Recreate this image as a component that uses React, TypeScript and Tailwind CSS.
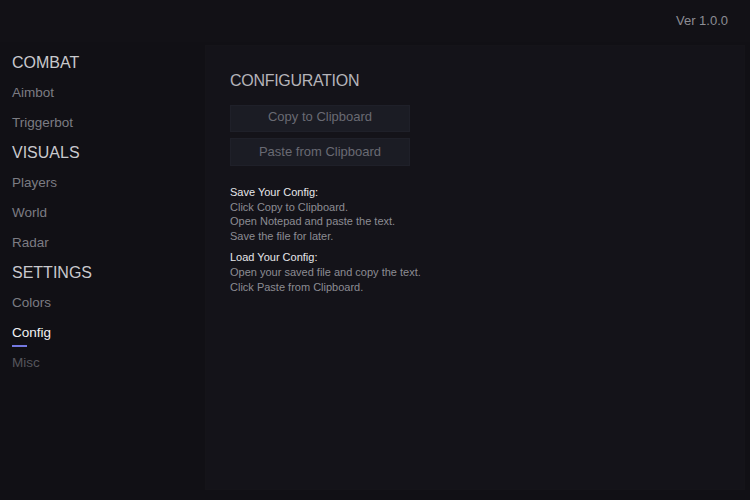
import React from 'react';

type NavItem = { label: string; kind: 'head' | 'item'; active?: boolean; dim?: boolean };

const NAV: NavItem[] = [
  { label: 'COMBAT', kind: 'head' },
  { label: 'Aimbot', kind: 'item' },
  { label: 'Triggerbot', kind: 'item' },
  { label: 'VISUALS', kind: 'head' },
  { label: 'Players', kind: 'item' },
  { label: 'World', kind: 'item' },
  { label: 'Radar', kind: 'item' },
  { label: 'SETTINGS', kind: 'head' },
  { label: 'Colors', kind: 'item' },
  { label: 'Config', kind: 'item', active: true },
  { label: 'Misc', kind: 'item', dim: true },
];

function Sidebar() {
  return (
    <nav className="w-[205px] shrink-0 pl-3 pt-[6px]">
      {NAV.map((n) =>
        n.kind === 'head' ? (
          <div key={n.label} className="h-[30px] flex items-center text-[16px] text-[#c9c9cd]">
            {n.label}
          </div>
        ) : (
          <div key={n.label} className="h-[30px] flex items-center relative">
            <span
              className={`text-[13.5px] ${
                n.active ? 'text-[#f2f2f4]' : n.dim ? 'text-[#55555c]' : 'text-[#7c7c83]'
              }`}
            >
              {n.label}
            </span>
            {n.active && <span className="absolute left-0 top-[27px] w-[15px] h-[2px] bg-[#7478e0]" />}
          </div>
        )
      )}
    </nav>
  );
}

function ConfigPanel() {
  return (
    <section className="flex-1 mr-[5px] mb-[10px] bg-[#141319] border border-[#151419] pl-[24px] pt-[25px]">
      <h2 className="text-[16px] text-[#b4b4b9] leading-[20px] tracking-[-0.3px]">CONFIGURATION</h2>
      <div className="mt-[14px] flex flex-col gap-[6px] w-[180px]">
        <button className="h-[27px] pb-[3px] bg-[#1b1c24] border border-[#1f2029] text-[13px] text-[#696a73]">
          Copy to Clipboard
        </button>
        <button className="h-[28px] bg-[#1b1c24] border border-[#1f2029] text-[13px] text-[#696a73]">
          Paste from Clipboard
        </button>
      </div>
      <div className="mt-[19px] text-[11px] leading-[14.6px] text-[#8c8c93]">
        <p className="text-[#e6e6ea]">Save Your Config:</p>
        <p>Click Copy to Clipboard.</p>
        <p>Open Notepad and paste the text.</p>
        <p>Save the file for later.</p>
        <p className="mt-[7px] text-[#e6e6ea]">Load Your Config:</p>
        <p>Open your saved file and copy the text.</p>
        <p>Click Paste from Clipboard.</p>
      </div>
    </section>
  );
}

export default function App() {
  return (
    <div
      className="w-[750px] h-[500px] bg-[#111015] flex flex-col overflow-hidden"
      style={{ fontFamily: '"Liberation Sans", Arial, sans-serif' }}
    >
      <header className="h-[42px] shrink-0 flex items-center justify-end pr-[22px] bg-[#121116]">
        <span className="text-[13px] text-[#8d8d94]">Ver 1.0.0</span>
      </header>
      <div className="flex flex-1 min-h-0">
        <Sidebar />
        <div className="flex-1 flex pt-[3px]">
          <ConfigPanel />
        </div>
      </div>
    </div>
  );
}
